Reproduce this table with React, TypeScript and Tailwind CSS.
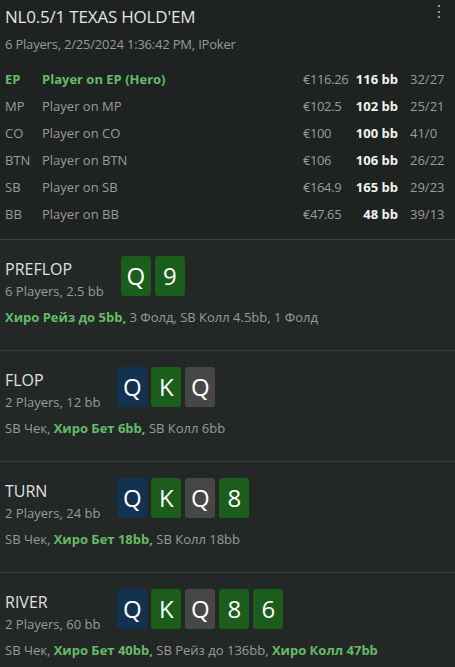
import React from "react";

type Row = { pos: string; name: string; eur: string; bb: string; stats: string; hero?: boolean };

const rows: Row[] = [
  { pos: "EP", name: "Player on EP (Hero)", eur: "€116.26", bb: "116 bb", stats: "32/27", hero: true },
  { pos: "MP", name: "Player on MP", eur: "€102.5", bb: "102 bb", stats: "25/21" },
  { pos: "CO", name: "Player on CO", eur: "€100", bb: "100 bb", stats: "41/0" },
  { pos: "BTN", name: "Player on BTN", eur: "€106", bb: "106 bb", stats: "26/22" },
  { pos: "SB", name: "Player on SB", eur: "€164.9", bb: "165 bb", stats: "29/23" },
  { pos: "BB", name: "Player on BB", eur: "€47.65", bb: "48 bb", stats: "39/13" },
];

type Card = { r: string; c: "g" | "b" | "k" };
type Part = { t: string; hero?: boolean };
type Street = { name: string; sub: string; cards: Card[]; actions: Part[] };

const Q_B: Card = { r: "Q", c: "b" };
const K_G: Card = { r: "K", c: "g" };
const Q_K: Card = { r: "Q", c: "k" };

const streets: Street[] = [
  {
    name: "PREFLOP",
    sub: "6 Players, 2.5 bb",
    cards: [
      { r: "Q", c: "g" },
      { r: "9", c: "g" },
    ],
    actions: [{ t: "Хиро Рейз до 5bb,", hero: true }, { t: " 3 Фолд, SB Колл 4.5bb, 1 Фолд" }],
  },
  {
    name: "FLOP",
    sub: "2 Players, 12 bb",
    cards: [Q_B, K_G, Q_K],
    actions: [{ t: "SB Чек, " }, { t: "Хиро Бет 6bb,", hero: true }, { t: " SB Колл 6bb" }],
  },
  {
    name: "TURN",
    sub: "2 Players, 24 bb",
    cards: [Q_B, K_G, Q_K, { r: "8", c: "g" }],
    actions: [{ t: "SB Чек, " }, { t: "Хиро Бет 18bb,", hero: true }, { t: " SB Колл 18bb" }],
  },
  {
    name: "RIVER",
    sub: "2 Players, 60 bb",
    cards: [Q_B, K_G, Q_K, { r: "8", c: "g" }, { r: "6", c: "g" }],
    actions: [
      { t: "SB Чек, " },
      { t: "Хиро Бет 40bb,", hero: true },
      { t: " SB Рейз до 136bb, " },
      { t: "Хиро Колл 47bb", hero: true },
    ],
  },
];

function CardBox({ card }: { card: Card }) {
  const bg = card.c === "g" ? "bg-[#1b5e1b]" : card.c === "b" ? "bg-[#12324f]" : "bg-[#474747]";
  return (
    <div
      className={`${bg} w-[30px] h-[40px] rounded-[3px] flex items-center justify-center text-[24px] leading-none text-white`}
    >
      {card.r}
    </div>
  );
}

export default function App() {
  return (
    <div
      className="min-h-screen bg-[#232827] text-[#9c9c9c]"
      style={{ fontFamily: '"Open Sans", "Noto Sans", sans-serif' }}
    >
      <div className="bg-[#1e2220] px-[5px] pt-[5px] pb-[11px] relative">
        <div className="text-[17px] leading-[24px] tracking-[-0.2px] text-[#e4e4e4]">NL0.5/1 TEXAS HOLD'EM</div>
        <div className="mt-[6px] text-[13px] leading-[18px] tracking-[-0.2px] text-[#9a9a9a]">
          6 Players, 2/25/2024 1:36:42 PM, IPoker
        </div>
        <div className="absolute right-[15px] top-[5px] flex flex-col gap-[3.5px]">
          <span className="block w-[2px] h-[2px] bg-[#9a9a9a]" />
          <span className="block w-[2px] h-[2px] bg-[#9a9a9a]" />
          <span className="block w-[2px] h-[2px] bg-[#9a9a9a]" />
        </div>
        <div className="mt-[13px] flex flex-col text-[13px]">
          {rows.map((r) => (
            <div key={r.pos} className="h-[27px] grid grid-cols-[37px_1fr_50px_45px_52px] items-center">
              <span className={r.hero ? "text-[#66bb66] font-bold" : ""}>{r.pos}</span>
              <span className={r.hero ? "text-[#66bb66] font-bold" : ""}>{r.name}</span>
              <span className="whitespace-nowrap tracking-[-0.4px]">{r.eur}</span>
              <span className="text-right font-bold text-[#f2f2f2] whitespace-nowrap">{r.bb}</span>
              <span className="pl-[12px] whitespace-nowrap">{r.stats}</span>
            </div>
          ))}
        </div>
      </div>
      {streets.map((s) => (
        <div key={s.name} className="border-t border-[#3b3f3e] h-[111px] px-[5px] pt-[16px]">
          <div className="flex items-start gap-[17px]">
            <div className="mt-[3px]">
              <div className="text-[16px] leading-[20px] text-[#e0e0e0]">{s.name}</div>
              <div className="mt-[3px] text-[13px] leading-[18px] text-[#9a9a9a]">{s.sub}</div>
            </div>
            <div className="flex gap-[4px]">
              {s.cards.map((c, i) => (
                <CardBox key={i} card={c} />
              ))}
            </div>
          </div>
          <div className="mt-[8px] text-[13px] leading-[18px] text-[#9a9a9a] whitespace-nowrap">
            {s.actions.map((p, i) => (
              <span key={i} className={p.hero ? "text-[#66bb66] font-bold" : ""}>
                {p.t}
              </span>
            ))}
          </div>
        </div>
      ))}
    </div>
  );
}
